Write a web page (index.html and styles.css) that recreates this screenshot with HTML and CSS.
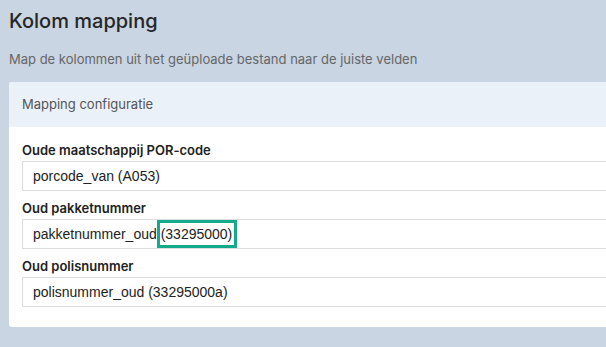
FILE: index.html
```html
<!DOCTYPE html>
<html lang="nl">
<head>
    <meta charset="UTF-8">
    <meta name="viewport" content="width=device-width, initial-scale=1.0">
    <title>Kolom mapping</title>
    <link rel="stylesheet" href="styles.css">
</head>
<body>
    <h1 class="page-title">Kolom mapping</h1>
    <p class="page-intro">Map de kolommen uit het geüploade bestand naar de juiste velden</p>

    <div class="card">
        <div class="card-header">Mapping configuratie</div>
        <div class="card-body">
            <div class="field">
                <label class="field-label">Oude maatschappij POR-code</label>
                <div class="field-value">porcode_van (A053)</div>
            </div>
            <div class="field">
                <label class="field-label">Oud pakketnummer</label>
                <div class="field-value">pakketnummer_oud <span class="highlight">(33295000)</span></div>
            </div>
            <div class="field">
                <label class="field-label">Oud polisnummer</label>
                <div class="field-value">polisnummer_oud (33295000a)</div>
            </div>
        </div>
    </div>
</body>
</html>
```

FILE: styles.css
```css
html, body {
    overflow: hidden;
}
body {
    background-color: #c9d5e3;
    font-family: Inter, "Noto Sans", sans-serif;
    margin: 0;
    padding: 0 0 0 9px;
    width: 700px;
}
.page-title {
    font-size: 20px;
    font-weight: 500;
    color: #262626;
    line-height: 24px;
    margin: 9px 0 0;
}
.page-intro {
    font-size: 13px;
    color: #666;
    line-height: 18px;
    margin: 17px 0 0;
}
.card {
    margin-top: 14px;
    width: 640px;
    background: #fff;
    border-radius: 3px;
    overflow: hidden;
}
.card-header {
    background: #eaf1f9;
    height: 45px;
    line-height: 45px;
    padding-left: 13px;
    font-size: 13px;
    color: #555;
}
.card-body {
    padding: 15px 13px 20px;
}
.field + .field {
    margin-top: 9px;
}
.field-label {
    display: block;
    font-size: 13px;
    font-weight: 600;
    color: #222;
    line-height: 16px;
    margin-bottom: 3px;
}
.field-value {
    height: 30px;
    box-sizing: border-box;
    border: 1px solid #ddd;
    padding: 0 10px;
    line-height: 28px;
    font-family: "Liberation Sans", Arial, sans-serif;
    font-size: 14px;
    color: #222;
}
.highlight {
    display: inline-block;
    line-height: 22px;
    padding: 0 2px 0 1px;
    margin-left: -4px;
    border: 3px solid #13ab8c;
}
```
